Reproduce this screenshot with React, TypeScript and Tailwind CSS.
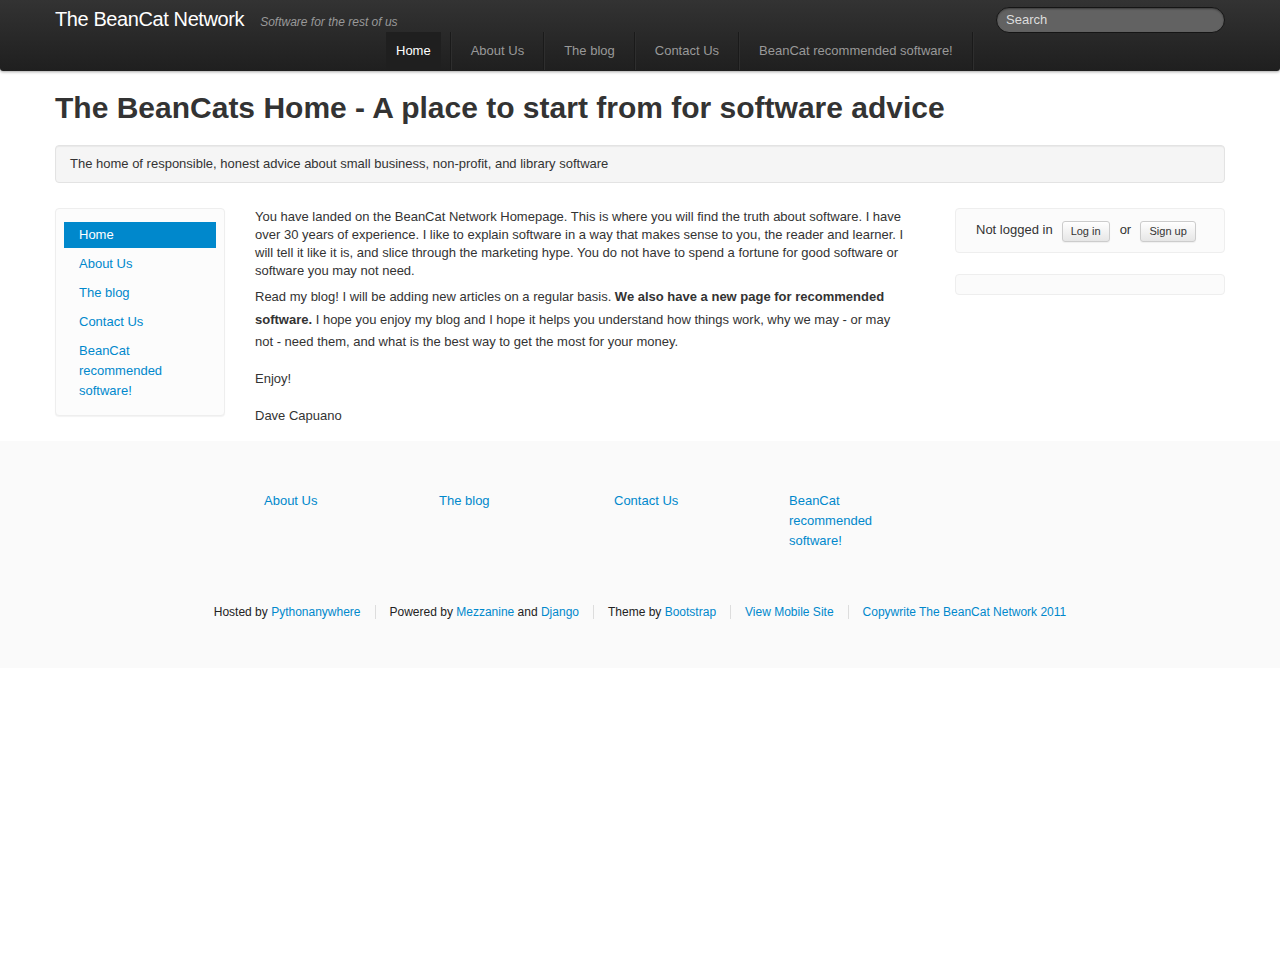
import React from 'react';

const navItems = ['Home', 'About Us', 'The blog', 'Contact Us', 'BeanCat recommended software!'];

function Divider() {
  return <div className="mx-[9px] h-[38px] w-[2px] border-l border-l-[#1a1a1a] border-r border-r-[#2e2e2e]" />;
}

export default function App() {
  return (
    <div className="min-h-[960px] bg-white text-[#333] text-[13px] leading-[18px]" style={{ fontFamily: '"Liberation Sans", Arial, sans-serif' }}>
      {/* top bar */}
      <div className="h-[71px] bg-gradient-to-b from-[#333] to-[#1f1f1f] shadow-[0_1px_3px_rgba(0,0,0,0.35)] rounded-b-[3px]">
        <div className="mx-auto w-[1170px]">
          <div className="flex h-[32px] items-start justify-between">
            <div className="mt-[3px] flex items-baseline">
              <span className="text-[20px] tracking-[-0.4px] text-white leading-[32px]">The BeanCat Network</span>
              <span className="ml-[16px] text-[12px] italic text-[#999]">Software for the rest of us</span>
            </div>
            <div className="mt-[7px] flex h-[26px] w-[229px] items-center rounded-full border border-[#151515] bg-[#626262] px-[9px] text-[13px] text-[#ddd] shadow-[inset_0_1px_2px_rgba(0,0,0,0.4)]">
              Search
            </div>
          </div>
          <div className="ml-[331px] flex h-[38px] items-center">
            {navItems.map((item, i) => (
              <React.Fragment key={item}>
                <div
                  className={
                    i === 0
                      ? 'flex h-[38px] items-center bg-[#1f1f1f] px-[10px] text-white'
                      : 'flex h-[38px] items-center px-[10px] text-[#999]'
                  }
                >
                  {item}
                </div>
                <Divider />
              </React.Fragment>
            ))}
          </div>
        </div>
      </div>

      <div className="mx-auto w-[1170px]">
        <h1 className="mt-[19px] text-[30px] font-bold leading-[36px] text-[#333]">
          The BeanCats Home - A place to start from for software advice
        </h1>

        <div className="mt-[19px] rounded-[4px] border border-[#e3e3e3] bg-[#f5f5f5] px-[14px] py-[9px] shadow-[inset_0_1px_1px_rgba(0,0,0,0.05)]">
          The home of responsible, honest advice about small business, non-profit, and library software
        </div>

        <div className="mt-[25px] flex items-start">
          {/* left nav */}
          <div className="w-[170px] rounded-[4px] border border-[#eee] bg-[#fcfcfc] px-[8px] pt-[13px] pb-[11px] shadow-[0_1px_1px_rgba(0,0,0,0.05)]">
            <div className="flex flex-col gap-[3px]">
              {navItems.map((item, i) => (
                <div
                  key={item}
                  className={
                    i === 0
                      ? 'bg-[#0088cc] px-[15px] py-[3px] leading-[20px] text-white'
                      : 'px-[15px] py-[3px] leading-[20px] text-[#0088cc]'
                  }
                >
                  {i === 4 ? (
                    <>
                      BeanCat
                      <br />
                      recommended
                      <br />
                      software!
                    </>
                  ) : (
                    item
                  )}
                </div>
              ))}
            </div>
          </div>

          {/* main text */}
          <div className="ml-[30px] w-[652px]">
            <p>
              You have landed on the BeanCat Network Homepage. This is where you will find the truth about software. I have over 30 years of experience. I like to explain software in a way that makes sense to you, the reader and learner. I will tell it like it is, and slice through the marketing hype. You do not have to spend a fortune for good software or software you may not need.
            </p>
            <p className="mt-[6px] leading-[22.5px]">
              Read my blog! I will be adding new articles on a regular basis. <b className="leading-[22.5px]">We also have a new page for recommended software.</b> I hope you enjoy my blog and I hope it helps you understand how things work, why we may - or may not - need them, and what is the best way to get the most for your money.
            </p>
            <p className="mt-[16px]">Enjoy!</p>
            <p className="mt-[19px]">Dave Capuano</p>
          </div>

          {/* right side */}
          <div className="ml-[48px] w-[270px]">
            <div className="flex h-[45px] items-center rounded-[4px] border border-[#eee] bg-[#fbfbfb] pb-[2px] pl-[20px]">
              <span>Not logged in</span>
              <span className="ml-[9px] mt-[3px] flex h-[21px] w-[48px] items-center justify-center rounded-[3px] border border-[#ccc] bg-gradient-to-b from-white to-[#e6e6e6] text-[11px] shadow-[0_1px_1px_rgba(0,0,0,0.05)]">
                Log in
              </span>
              <span className="ml-[10px]">or</span>
              <span className="ml-[9px] mt-[3px] flex h-[21px] w-[56px] items-center justify-center rounded-[3px] border border-[#ccc] bg-gradient-to-b from-white to-[#e6e6e6] text-[11px] shadow-[0_1px_1px_rgba(0,0,0,0.05)]">
                Sign up
              </span>
            </div>
            <div className="mt-[21px] h-[21px] rounded-[4px] border border-[#eee] bg-[#fbfbfb]" />
          </div>
        </div>
      </div>

      {/* footer */}
      <div className="mt-[16px] h-[227px] bg-[#fafafa]">
        <div className="mx-auto w-[1170px] pt-[50px]">
          <div className="ml-[209px] flex leading-[20px] text-[#0088cc]">
            <div className="w-[175px]">About Us</div>
            <div className="w-[175px]">The blog</div>
            <div className="w-[175px]">Contact Us</div>
            <div className="w-[110px]">
              BeanCat
              <br />
              recommended
              <br />
              software!
            </div>
          </div>
          <div className="mt-[52px] flex items-center justify-center text-[12px] text-[#222]">
            <span>
              Hosted by <span className="text-[#0088cc]">Pythonanywhere</span>
            </span>
            <span className="mx-[14px] h-[14px] w-px bg-[#ddd]" />
            <span>
              Powered by <span className="text-[#0088cc]">Mezzanine</span> and <span className="text-[#0088cc]">Django</span>
            </span>
            <span className="mx-[14px] h-[14px] w-px bg-[#ddd]" />
            <span>
              Theme by <span className="text-[#0088cc]">Bootstrap</span>
            </span>
            <span className="mx-[14px] h-[14px] w-px bg-[#ddd]" />
            <span className="text-[#0088cc]">View Mobile Site</span>
            <span className="mx-[14px] h-[14px] w-px bg-[#ddd]" />
            <span className="text-[#0088cc]">Copywrite The BeanCat Network 2011</span>
          </div>
        </div>
      </div>
    </div>
  );
}
